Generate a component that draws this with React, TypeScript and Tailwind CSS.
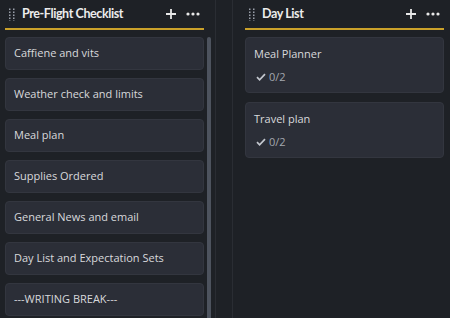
import React from "react";

const Grip = () => (
  <svg width="6" height="13" viewBox="0 0 6 13" className="shrink-0">
    {[0, 1].map((c) =>
      [0, 1, 2, 3, 4].map((r) => (
        <rect key={`${c}-${r}`} x={c * 4} y={r * 3 + 0.5} width="1.5" height="1.5" fill="#9aa0aa" />
      ))
    )}
  </svg>
);

const PlusIcon = () => (
  <svg width="12" height="12" viewBox="0 0 12 12" className="shrink-0">
    <path d="M6 1v10M1 6h10" stroke="#e8e8e8" strokeWidth="1.8" />
  </svg>
);

const Dots = () => (
  <svg width="14" height="4" viewBox="0 0 14 4" className="shrink-0">
    <circle cx="2" cy="2" r="1.6" fill="#e8e8e8" />
    <circle cx="7" cy="2" r="1.6" fill="#e8e8e8" />
    <circle cx="12" cy="2" r="1.6" fill="#e8e8e8" />
  </svg>
);

const Check = () => (
  <svg width="10" height="8" viewBox="0 0 10 8" className="shrink-0">
    <path d="M1 4.2l2.6 2.6L9 1.2" stroke="#c3c7ce" strokeWidth="1.7" fill="none" />
  </svg>
);

const Header = ({ title }: { title: string }) => (
  <div className="h-[28px] flex items-center pl-[4px] pr-[4px]">
    <Grip />
    <div
      className="ml-[7px] text-[12.5px] font-bold text-[#ececec] tracking-[-0.4px]"
      style={{ fontFamily: 'Lato, "Open Sans", sans-serif' }}
    >
      {title}
    </div>
    <div className="ml-auto flex items-center gap-[9px]">
      <PlusIcon />
      <Dots />
    </div>
  </div>
);

const left = [
  "Caffiene and vits",
  "Weather check and limits",
  "Meal plan",
  "Supplies Ordered",
  "General News and email",
  "Day List and Expectation Sets",
  "---WRITING BREAK---",
];

const right = ["Meal Planner", "Travel plan"];

export default function App() {
  return (
    <div
      className="w-[450px] h-[318px] overflow-hidden bg-[#1e2126] flex"
      style={{ fontFamily: '"Open Sans", "Noto Sans", sans-serif' }}
    >
      <div className="w-[216px] shrink-0 border-r border-[#2a2d33] pl-[5px] flex flex-col">
        <div className="w-[199px]">
          <Header title="Pre-Flight Checklist" />
          <div className="h-[2px] bg-[#caa12a]" />
        </div>
        <div className="flex mt-[7px]">
          <div className="w-[199px] flex flex-col gap-[8px]">
            {left.map((t) => (
              <div
                key={t}
                className="h-[33px] shrink-0 rounded-[4px] bg-[#2b2e37] border border-[#33363f] flex items-center pl-[8px] text-[11px] text-[#d8d9dc]"
              >
                {t}
              </div>
            ))}
          </div>
          <div className="ml-[3px] w-[4px] h-[300px] rounded-t-[2px] bg-[#4d535e]" />
        </div>
      </div>
      <div className="w-[16px] shrink-0" />
      <div className="flex-1 border-l border-[#2a2d33] pl-[12px] flex flex-col">
        <div className="w-[199px]">
          <Header title="Day List" />
          <div className="h-[2px] bg-[#caa12a]" />
        </div>
        <div className="w-[199px] mt-[7px] flex flex-col gap-[9px]">
          {right.map((t) => (
            <div
              key={t}
              className="h-[56px] rounded-[4px] bg-[#2b2e37] border border-[#33363f] pl-[8px] pt-[7px] flex flex-col"
            >
              <div className="text-[11px] leading-[18px] text-[#d8d9dc]">{t}</div>
              <div className="mt-[7px] flex items-center gap-[3px] text-[11px] leading-[14px] text-[#a3a7ae]">
                <span className="ml-[2px]"><Check /></span>
                <span>0/2</span>
              </div>
            </div>
          ))}
        </div>
      </div>
    </div>
  );
}
